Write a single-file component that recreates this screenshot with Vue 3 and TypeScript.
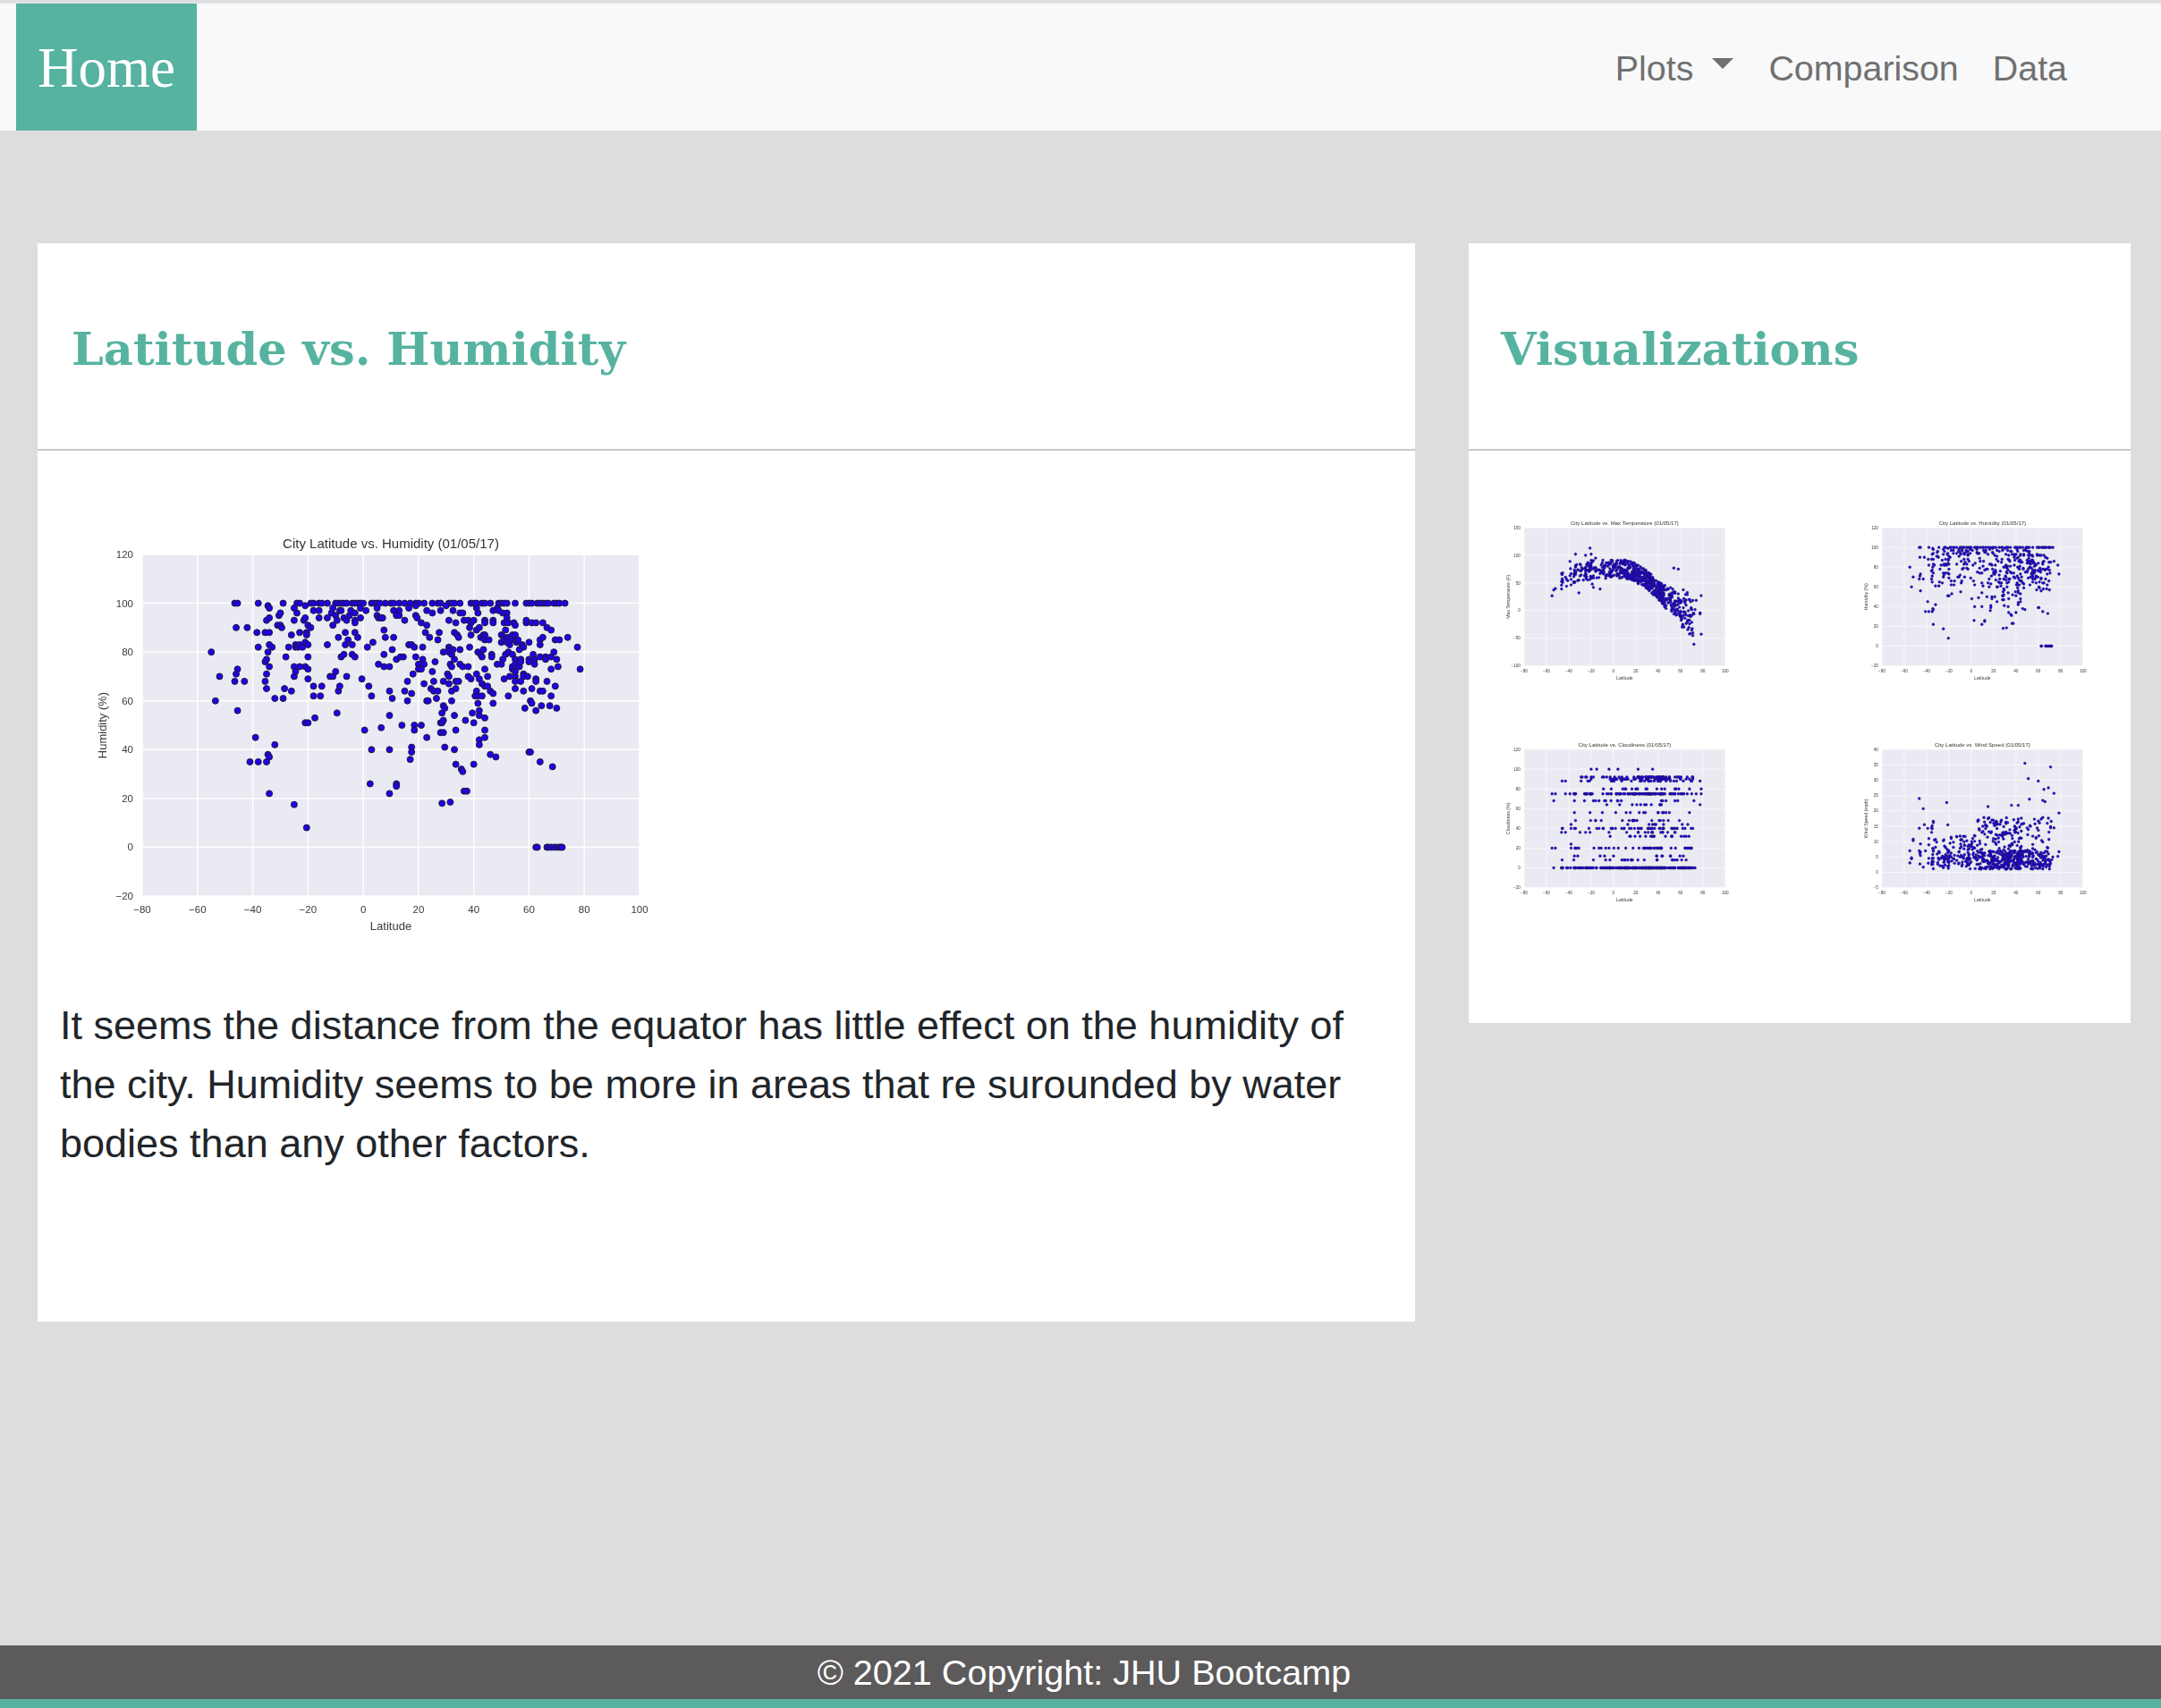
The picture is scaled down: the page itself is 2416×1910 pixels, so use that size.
<script setup lang="ts">
import { h } from 'vue'

type Point = [number, number]

interface ChartSpec {
  title: string
  yLabel: string
  yMin: number
  yMax: number
  yStep: number
  points: Point[]
}

// plot box inside the 635x455 viewBox, same proportions for big and small charts
const PLOT = { x: 59, y: 25, w: 556, h: 382 }
const X_MIN = -80
const X_MAX = 100

const topRow = [
  -46.5, -45.5, -38, -29, -24, -23, -19, -18, -16, -15, -13, -10, -9, -8, -7, -6, -4, -3, -2, -1, 0, 3, 4, 5, 6, 8,
  10, 11, 13, 15, 17, 19, 20, 22, 25, 27, 28, 31, 32, 33, 35, 39, 40, 41, 43, 44, 46, 49, 50, 51, 52, 55, 59, 60, 61,
  63, 64, 65, 66, 67, 69, 70, 71, 73,
]
const zeroRow = [62.5, 63, 66.5, 67, 68, 69, 70, 71, 71.5, 72]

const scattered: Point[] = [
  [-55, 80], [-53.5, 60], [-52, 70], [-46.5, 68], [-46, 90], [-46, 71], [-45.5, 73], [-45.5, 56], [-43, 68], [-42, 90],
  [-41, 35], [-39, 45], [-38, 35], [-38.5, 88], [-38, 82], [-35.5, 88], [-35.5, 76], [-35.5, 68], [-35, 65], [-35, 35],
  [-35, 93], [-35, 77], [-35, 71], [-34.5, 99], [-34, 98], [-34, 94], [-34, 88], [-34, 83], [-34.5, 80], [-34, 74],
  [-34.5, 38], [-34, 37], [-34, 22], [-33, 82], [-32, 61], [-32, 42], [-31, 91], [-30.5, 95], [-30, 96], [-30, 91],
  [-29.5, 90], [-29, 61], [-28.5, 65], [-28, 78], [-27, 82], [-26, 87], [-26, 64], [-25, 98], [-25, 74], [-25, 70],
  [-25, 93], [-24.5, 83], [-24.5, 82], [-24.5, 72], [-25, 17.5], [-24, 96], [-23.5, 82], [-23, 83], [-23, 88], [-23, 74],
  [-22, 82], [-21.5, 93], [-21, 99], [-21, 94], [-21, 84], [-21, 74], [-21, 51], [-20.5, 88], [-20.5, 87], [-20.5, 8],
  [-20, 83], [-20, 78], [-20, 73], [-20, 69], [-20, 51], [-20, 91], [-19, 90], [-18, 97], [-18, 66], [-18, 62],
  [-17.5, 53], [-16, 97], [-16, 94], [-15.5, 62], [-15, 66], [-13, 94], [-13, 83], [-12, 70], [-11.5, 96], [-11, 91],
  [-11, 70], [-11, 98], [-10, 95], [-10, 72], [-9.5, 93], [-9.5, 55], [-9, 86], [-9, 64], [-8.5, 97], [-8.5, 66],
  [-8, 78], [-8, 97], [-7, 94], [-7, 79], [-6.5, 88], [-6.5, 83], [-6, 93], [-6, 70], [-5.5, 85], [-5, 95],
  [-4.5, 97], [-4, 83], [-4, 79], [-3, 96], [-3, 93], [-3, 92], [-3, 88], [-3, 78], [-2, 86], [-1, 98],
  [-1, 94], [-0.5, 69], [0.5, 48], [1, 97], [1.5, 82], [2, 66], [2.5, 26], [3, 62], [3, 40], [3.5, 84],
  [5, 98], [5, 95], [5.5, 94], [5.5, 75], [6.5, 94], [6.5, 49], [7, 94], [7.5, 89], [7.5, 79], [7.5, 74],
  [8, 86], [9.5, 74], [9.5, 64], [9.5, 54], [9.5, 40], [9.5, 22], [10.5, 81], [10.5, 61], [11, 97], [11, 86],
  [12, 95], [12, 77], [12, 26], [12, 25], [13, 97], [13, 95], [13.5, 78], [14, 50], [14.5, 78], [15, 93],
  [15, 64], [16, 68], [16, 60], [16.5, 98], [16.5, 83], [17, 36], [17.5, 83], [17.5, 63], [17.5, 41], [17.5, 39],
  [18, 71], [18.5, 82], [18.5, 50], [18.5, 48], [19, 95], [19, 99], [19, 78], [19.5, 94], [20, 75], [20, 73],
  [21, 92], [21, 73], [21, 50], [21.5, 82], [21.5, 77], [22, 67], [22, 75], [22.5, 88], [23, 97], [23, 91],
  [23, 60], [23, 45], [23.5, 60], [24, 86], [24.5, 65], [25, 96], [25, 72], [25.5, 64], [25.5, 68], [26, 76],
  [26.5, 61], [27, 85], [27, 64], [27.5, 88], [28, 97], [28, 51], [28, 47], [28.5, 55], [28.5, 51], [28.5, 18],
  [29, 80], [29, 68], [29, 58], [29, 47], [29, 52], [29.5, 57], [29.5, 41], [30, 99], [30.5, 71], [31, 93],
  [31, 82], [31, 81], [31, 80], [31, 70], [31, 67], [31.5, 18.5], [31.5, 75], [32, 79], [32, 74], [32, 64],
  [32, 60], [32.5, 97], [32.5, 81], [33, 88], [33, 77], [33, 54], [33, 40], [33.5, 92], [33.5, 68], [33.5, 65],
  [33.5, 48], [33.5, 34], [34, 87], [34.5, 68], [34.5, 86], [35, 96], [35, 81], [35, 75], [35.5, 32], [36, 96],
  [36, 74], [36, 31], [36.5, 93], [36.5, 23], [37, 52], [37.5, 23], [38, 93], [38, 70], [38, 74], [38.5, 90],
  [38.5, 82], [39, 92], [39, 69], [39, 87], [39.5, 55], [40, 93], [40, 34], [40, 51], [40.5, 62], [41, 98],
  [41, 89], [41, 71], [41, 64], [41.5, 96], [41.5, 80], [41.5, 62], [41.5, 59], [42, 90], [42, 69], [42, 54],
  [42, 56], [42, 44], [42, 42], [42.5, 86], [42.5, 79], [43, 67], [43, 78], [43, 62], [43.5, 87], [43.5, 81],
  [44, 93], [44, 73], [44, 66], [44, 53], [44, 48], [44, 45], [44, 92], [44, 85], [44, 87], [45, 66],
  [45, 70], [45.5, 85], [46, 64], [46, 38], [46.5, 79], [46.5, 78], [47, 93], [47, 92], [47, 97], [47, 63],
  [47, 59], [48, 37], [48.5, 98], [48.5, 75], [49, 97], [50, 87], [50, 84], [50, 75], [50.5, 96], [50.5, 77],
  [51, 92], [51, 86], [51, 85], [51, 69], [51.5, 89], [51.5, 79], [52, 96], [52, 94], [52, 84], [52.5, 92],
  [52.5, 86], [52.5, 80], [52.5, 62], [53, 70], [53, 83], [53.5, 85], [54, 87], [54, 73], [54, 74], [54, 79],
  [54.5, 92], [55, 70], [55, 65], [55, 85], [55, 91], [55, 77], [55, 75], [55, 72], [55, 68], [55, 87],
  [55.5, 84], [56, 85], [56.5, 81], [56.5, 74], [57, 77], [57, 76], [57, 68], [57.5, 83], [58, 71], [58, 70],
  [58, 64], [58, 82], [58.5, 57], [59, 92], [59, 93], [59.5, 70], [60, 39], [60, 84], [60, 77], [60, 76],
  [60.5, 60], [60.5, 39], [61, 92], [61, 65], [61, 59], [61.5, 79], [62, 77], [62, 75], [62.5, 69], [62.5, 68],
  [62.5, 92], [62.5, 56], [64, 85], [64, 83], [64, 78], [64, 64], [64, 35], [64.5, 58], [65, 86], [65, 64],
  [65, 92], [66, 78], [66, 77], [66.5, 90], [66.5, 68], [68, 89], [68, 78], [68, 73], [68, 62], [67.5, 58],
  [68.5, 33], [69, 80], [69.5, 66], [69.5, 85], [70, 57], [70, 77], [70.5, 74], [71, 85], [74, 86], [77.5, 82],
  [78.5, 73],
]

const humidity: Point[] = [
  ...topRow.map((lat): Point => [lat, 100]),
  ...zeroRow.map((lat): Point => [lat, 0]),
  ...scattered,
]

// small seeded generator so the thumbnails are stable between runs
const makeRandom = (seed: number) => () => {
  seed = (seed + 0x6d2b79f5) | 0
  let t = Math.imul(seed ^ (seed >>> 15), 1 | seed)
  t = (t + Math.imul(t ^ (t >>> 7), 61 | t)) ^ t
  return ((t ^ (t >>> 14)) >>> 0) / 4294967296
}

// thumbnails look denser than the hand-read list, so pad it with nearby cities
const latitudes = [...humidity.map((p) => p[0]), ...scattered.slice(110, 300).map((p) => p[0] + 0.8)]

const tempCurve = (lat: number) => {
  const knots: Point[] = [[-56, 38], [-40, 62], [-20, 74], [0, 76], [15, 74], [30, 56], [45, 28], [55, 15], [65, 0], [72, -15], [80, -15]]
  for (let i = 1; i < knots.length; i++) {
    const [x0, y0] = knots[i - 1]
    const [x1, y1] = knots[i]
    if (lat <= x1) return y0 + ((lat - x0) / (x1 - x0)) * (y1 - y0)
  }
  return -15
}

const rndT = makeRandom(11)
const temperature: Point[] = [
  ...latitudes.map((lat): Point => {
    const spread = lat > 60 ? 72 : lat > 45 ? 46 : 34
    return [lat, tempCurve(lat) + (rndT() - 0.5) * spread]
  }),
  [-21, 113], [-20, 102], [-34, 102], [-25, 100], [-16, 95], [-39, 89], [-31, 32], [-12, 39], [-19, 48], [-18, 42], [54, 77], [58, 75],
  [72, -61], [78.5, 27], [77.5, -6], [-46.5, 39], [-46.5, 46], [-42, 44],
]

const rndC = makeRandom(23)
const cloudLevels: Point[] = [[0, 26], [92, 9], [90, 8], [88, 5], [75, 16], [40, 8], [20, 8], [48, 3], [56, 3], [68, 3], [64, 2], [80, 3], [36, 3], [32, 2], [8, 3], [12, 2], [44, 1]]
const cloudTotal = cloudLevels.reduce((sum, level) => sum + level[1], 0)
const pickCloud = () => {
  let r = rndC() * cloudTotal
  for (const [value, weight] of cloudLevels) {
    r -= weight
    if (r <= 0) return value
  }
  return 0
}
const cloudiness: Point[] = [
  ...latitudes.map((lat): Point => [lat, pickCloud()]),
  [-55, 75], [-52, 75], [-43, 75], [-53.5, 0], [-46.5, 36], [-43, 36], [-46, 88], [-46, 8], [-46, 0], [-20, 100], [-15, 100],
  [-4, 100], [4, 100], [22, 100], [35, 100], [-38, 24], [77.5, 64], [78.5, 75],
]

const rndW = makeRandom(37)
const windSpeed: Point[] = [
  ...latitudes.map((lat): Point => {
    const cap = lat > 5 ? 18 : lat < -20 ? 17 : 12
    if (rndW() < 0.68) return [lat, 1 + rndW() * 6]
    return [lat, 7 + rndW() * (cap - 7)]
  }),
  [48, 35.5], [71, 34.3], [51, 30.5], [60, 29.7], [65, 27], [69, 27.5], [74, 25.7], [-46.5, 24], [52, 23.8], [-22, 22.7],
  [64, 23.4], [66, 23], [15, 21.4], [36, 21.8], [42, 21.8], [-43, 20.7], [78.5, 19.3], [-55, 7], [-53.5, 4.7], [-52, 10.3],
]

const mainChart: ChartSpec = {
  title: 'City Latitude vs. Humidity (01/05/17)',
  yLabel: 'Humidity (%)',
  yMin: -20,
  yMax: 120,
  yStep: 20,
  points: humidity,
}

const thumbnails: ChartSpec[] = [
  { title: 'City Latitude vs. Max Temperature (01/05/17)', yLabel: 'Max Temperature (F)', yMin: -100, yMax: 150, yStep: 50, points: temperature },
  mainChart,
  { title: 'City Latitude vs.  Cloudiness (01/05/17)', yLabel: 'Cloudiness (%)', yMin: -20, yMax: 120, yStep: 20, points: cloudiness },
  { title: 'City Latitude vs. Wind Speed (01/05/17)', yLabel: 'Wind Speed (mph)', yMin: -5, yMax: 40, yStep: 5, points: windSpeed },
]

const tickText = (n: number) => (n < 0 ? `\u2212${-n}` : `${n}`)

const range = (from: number, to: number, step: number) => {
  const out: number[] = []
  for (let v = from; v <= to; v += step) out.push(v)
  return out
}

const ScatterPlot = (props: { chart: ChartSpec }) => {
  const { chart } = props
  const sx = (v: number) => PLOT.x + ((v - X_MIN) / (X_MAX - X_MIN)) * PLOT.w
  const sy = (v: number) => PLOT.y + PLOT.h - ((v - chart.yMin) / (chart.yMax - chart.yMin)) * PLOT.h
  const xTicks = range(X_MIN, X_MAX, 20)
  const yTicks = range(chart.yMin, chart.yMax, chart.yStep)
  const label = { fill: '#3a3a3a', 'font-size': 11.5 }
  const midX = PLOT.x + PLOT.w / 2
  const midY = PLOT.y + PLOT.h / 2

  return h('svg', { viewBox: '0 0 635 455', 'font-family': "'Liberation Sans', Arial, sans-serif", role: 'img' }, [
    h('rect', { x: PLOT.x, y: PLOT.y, width: PLOT.w, height: PLOT.h, fill: '#eaeaf2' }),
    ...xTicks.map((t) => h('line', { x1: sx(t), x2: sx(t), y1: PLOT.y, y2: PLOT.y + PLOT.h, stroke: '#fff', 'stroke-width': 1.4 })),
    ...yTicks.map((t) => h('line', { x1: PLOT.x, x2: PLOT.x + PLOT.w, y1: sy(t), y2: sy(t), stroke: '#fff', 'stroke-width': 1.4 })),
    ...chart.points.map(([x, y]) =>
      h('circle', { cx: sx(x), cy: sy(y), r: 3.5, fill: '#2300e6', stroke: '#1c1c3c', 'stroke-width': 1 }),
    ),
    ...xTicks.map((t) => h('text', { ...label, x: sx(t), y: PLOT.y + PLOT.h + 19, 'text-anchor': 'middle' }, tickText(t))),
    ...yTicks.map((t) => h('text', { ...label, x: PLOT.x - 10, y: sy(t) + 4, 'text-anchor': 'end' }, tickText(t))),
    h('text', { fill: '#333', 'font-size': 15, x: midX, y: 18, 'text-anchor': 'middle', 'xml:space': 'preserve' }, chart.title),
    h('text', { fill: '#3a3a3a', 'font-size': 13, x: midX, y: 445, 'text-anchor': 'middle' }, 'Latitude'),
    h('text', { fill: '#3a3a3a', 'font-size': 13, x: 0, y: 0, 'text-anchor': 'middle', transform: `translate(19 ${midY}) rotate(-90)` }, chart.yLabel),
  ])
}
</script>

<template>
  <div class="page">
    <nav class="navbar">
      <a class="brand">Home</a>
      <div class="links">
        <a class="link dropdown">Plots<span class="caret"></span></a>
        <a class="link">Comparison</a>
        <a class="link">Data</a>
      </div>
    </nav>

    <main class="content">
      <section class="card detail">
        <header class="card-head">
          <h2>Latitude vs. Humidity</h2>
        </header>
        <div class="detail-body">
          <ScatterPlot class="main-plot" :chart="mainChart" />
          <p>
            It seems the distance from the equator has little effect on the humidity of the city. Humidity seems to be
            more in areas that re surounded by water bodies than any other factors.
          </p>
        </div>
      </section>

      <aside class="card side">
        <header class="card-head">
          <h2>Visualizations</h2>
        </header>
        <div class="thumbs">
          <ScatterPlot v-for="chart in thumbnails" :key="chart.title" class="thumb" :chart="chart" />
        </div>
      </aside>
    </main>

    <footer class="footer">© 2021 Copyright: JHU Bootcamp</footer>
  </div>
</template>

<style>
html,
body {
  margin: 0;
  background: #ddd;
}
</style>

<style scoped>
.page {
  min-height: 1910px;
  display: flex;
  flex-direction: column;
  padding-top: 2px;
  box-sizing: border-box;
  background: #ddd;
  font-family: 'Liberation Sans', Arial, sans-serif;
  color: #212529;
}

.navbar {
  display: flex;
  justify-content: space-between;
  height: 142px;
  padding: 0 105px 0 18px;
  background: #f8f9fa;
  border-top: 2px solid #dfe1e4;
}

.brand {
  display: flex;
  align-items: center;
  padding: 2px 24px 0;
  background: #56b3a0;
  color: #fff;
  font-family: 'Liberation Serif', 'Times New Roman', serif;
  font-size: 63px;
}

.links {
  display: flex;
  align-items: center;
  gap: 38px;
  padding-top: 2px;
  color: #707070;
  font-size: 39.4px;
}

.dropdown {
  display: flex;
  align-items: center;
}

.caret {
  width: 0;
  height: 0;
  margin: -10px 1px 0 21px;
  border-top: 12px solid #707070;
  border-left: 12px solid transparent;
  border-right: 12px solid transparent;
}

.content {
  flex: 1;
  display: flex;
  align-items: flex-start;
  gap: 60px;
  padding: 126px 34px 0 42px;
}

.card {
  background: #fff;
}

.detail {
  width: 1540px;
}

.side {
  width: 740px;
}

.card-head {
  display: flex;
  align-items: center;
  height: 230px;
  padding-left: 38px;
  border-bottom: 2px solid #c8c8c8;
}

.side .card-head {
  padding-left: 36px;
}

.card-head h2 {
  margin: 6px 0 0;
  color: #56b3a0;
  font-family: 'DejaVu Serif', Georgia, serif;
  font-size: 51px;
  font-weight: 700;
}

.detail-body {
  padding: 91px 40px 166px 25px;
}

.main-plot {
  display: block;
  width: 635px;
  height: 455px;
  margin-left: 33px;
  filter: blur(0.45px);
}

.detail-body p {
  margin: 64px 0 0;
  font-size: 45px;
  line-height: 66px;
}

.thumbs {
  display: grid;
  grid-template-columns: repeat(2, 400px);
  grid-auto-rows: 248px;
  padding: 76px 0 68px 38px;
}

.thumb {
  display: block;
  width: 257px;
  height: 184px;
  filter: blur(0.7px);
}

.footer {
  height: 60px;
  padding-left: 8px;
  line-height: 60px;
  text-align: center;
  background: #5c5a5b;
  border-bottom: 10px solid #56b3a0;
  color: #fff;
  font-size: 39.6px;
}
</style>
